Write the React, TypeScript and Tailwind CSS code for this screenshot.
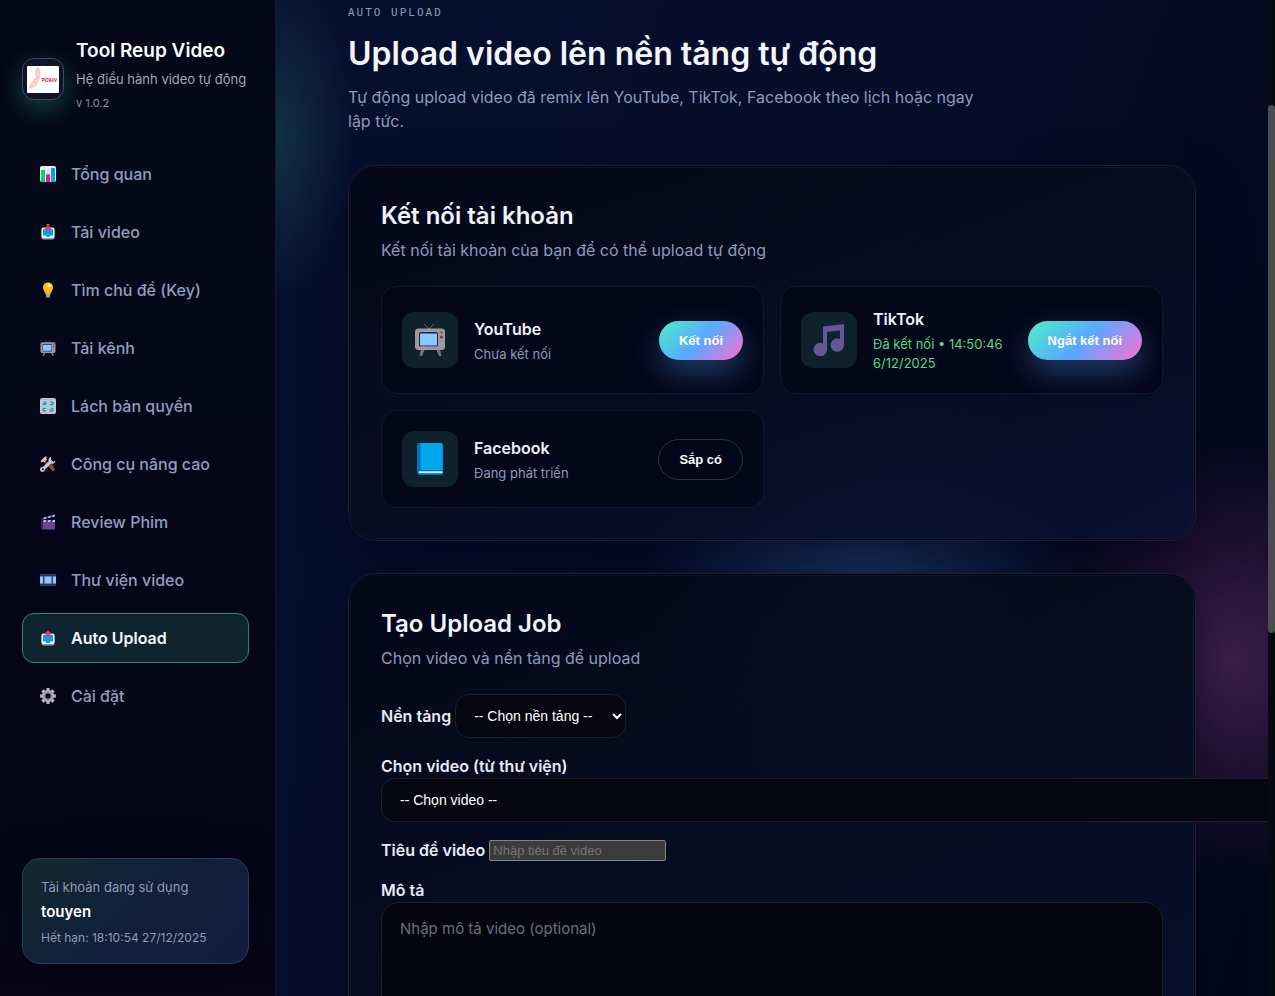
import type { ReactNode } from "react";
import clsx from "clsx";

interface IconProps {
  className?: string;
}

function ChartIcon({ className }: IconProps) {
  return (
    <svg viewBox="0 0 32 32" className={className} aria-hidden="true">
      <rect width="32" height="32" rx="4" fill="#f3eef8" />
      <path
        d="M0 8h32M0 16h32M0 24h32M8 0v32M16 0v32M24 0v32"
        stroke="#cdc4d6"
        strokeWidth="1"
      />
      <path d="M2 8h8v24H4a2 2 0 0 1-2-2z" fill="#00d26a" />
      <path d="M12 17h8v15h-8z" fill="#f70a8d" />
      <path d="M22 4h8v26a2 2 0 0 1-2 2h-6z" fill="#00a6ed" />
    </svg>
  );
}

function TrayIcon({ className, up }: IconProps & { up?: boolean }) {
  return (
    <svg viewBox="0 0 32 32" className={className} aria-hidden="true">
      <rect x="3" y="8" width="26" height="23" rx="4" fill="#9b9b9b" />
      <rect x="3" y="7" width="26" height="21" rx="4" fill="#f4f4f4" />
      <path
        d="M9 9h14a3 3 0 0 1 3 3v11h-5l-2 3h-6l-2-3H6V12a3 3 0 0 1 3-3z"
        fill="#00a6ed"
      />
      {up ? (
        <path d="M16 0l7 8h-4v8h-6V8H9z" fill="#f92f60" />
      ) : (
        <path d="M13 0h6v8.500h4L16 16 9 8.500h4z" fill="#f92f60" />
      )}
    </svg>
  );
}

function BulbIcon({ className }: IconProps) {
  return (
    <svg viewBox="0 0 32 32" className={className} aria-hidden="true">
      <path
        d="M16 1C10 1 6 5.500 6 11c0 5 4 7.500 5 13h10c1-5.500 5-8 5-13 0-5.500-4-10-10-10z"
        fill="#fcc21b"
      />
      <ellipse cx="19" cy="7" rx="4" ry="3" fill="#fff0a3" />
      <path d="M14 24l-1.500-9M18 24l1.500-9" stroke="#f19534" strokeWidth="1.500" />
      <path d="M12 24h8v5a2 2 0 0 1-2 2h-4a2 2 0 0 1-2-2z" fill="#a8a4b0" />
    </svg>
  );
}

function TvIcon({ className }: IconProps) {
  return (
    <svg viewBox="0 0 32 32" className={className} aria-hidden="true">
      <path d="M10 0l5 5M20 0l-5 5" stroke="#636363" strokeWidth="1" />
      <path d="M7 25h4l-3 7H5.500zM22 25h4l1.500 7H25z" fill="#757575" />
      <rect x="1" y="4.500" width="30" height="21.500" rx="3.500" fill="#9b9b9b" />
      <rect x="5" y="8" width="19" height="15" rx="2" fill="#321b41" />
      <path d="M6.500 22.500h16a1.500 1.500 0 0 0 1.500-1.500" stroke="#8d65c5" fill="none" />
      <rect x="6" y="9.500" width="17" height="12" rx="1" fill="#83cbff" />
      <circle cx="27.500" cy="8.500" r="1.300" fill="#636363" />
      <circle cx="27.500" cy="13" r="1.500" fill="#ca0b4a" />
    </svg>
  );
}

function KnobsIcon({ className }: IconProps) {
  return (
    <svg viewBox="0 0 32 32" className={className} aria-hidden="true">
      <rect width="32" height="32" rx="4" fill="#c9c5c9" />
      <path
        d="M3 3h26M3 16h26M3 29h26"
        stroke="#8c878e"
        strokeWidth="1"
        strokeDasharray="2 3"
      />
      <g fill="#0c9be3">
        <circle cx="9" cy="10.500" r="4.200" />
        <circle cx="23" cy="10.500" r="4.200" />
        <circle cx="9" cy="23.500" r="4.200" />
        <circle cx="23" cy="23.500" r="4.200" />
      </g>
      <path
        d="M9 10.500l-2-2M23 10.500l-4 0M9 23.500h4M23 23.500l-2-3"
        stroke="#fff"
        strokeWidth="2"
      />
    </svg>
  );
}

function ToolsIcon({ className }: IconProps) {
  return (
    <svg viewBox="0 0 32 32" className={className} aria-hidden="true">
      <path d="M11 9l19 18-4 4L8 12z" fill="#8a4a32" />
      <path
        d="M1 10l9-9c2-.5 4 0 5 .8l-3 2.200 2 3-5.500 5.500-3-1.500L3 13z"
        fill="#cdc4d6"
      />
      <path
        d="M22 1.500a7 7 0 0 0-4.500 9L5.500 22A5 5 0 1 0 10 27l12-11.500A7 7 0 0 0 31 9l-4.500 2.500-4-3.500z"
        fill="#cdc4d6"
      />
      <path d="M24 14L30 27l-4 4-8-9z" fill="#8a4a32" />
      <circle cx="5.500" cy="26.500" r="1.800" fill="#06071b" />
    </svg>
  );
}

function ClapperIcon({ className }: IconProps) {
  return (
    <svg viewBox="0 0 32 32" className={className} aria-hidden="true">
      <path d="M3 14h27v15a2 2 0 0 1-2 2H5a2 2 0 0 1-2-2z" fill="#6d4590" />
      <path d="M3 14h3v17H5a2 2 0 0 1-2-2z" fill="#3f2357" />
      <path d="M3 12h27v4H3z" fill="#46275f" />
      <path d="M8 12h5l-2 4H6zM17 12h5l-2 4h-5zM26 12h4v2l-1 2h-5z" fill="#b4c6ff" />
      <path d="M3 8l26-7 1 4L4 12z" fill="#46275f" />
      <path d="M8 6.700l5-1.400-1 4-5 1.400zM17 4.300l5-1.400-1 4-5 1.300zM25.500 2l3.500-1 1 4-5.500 1.500z" fill="#b4c6ff" />
    </svg>
  );
}

function FilmIcon({ className }: IconProps) {
  return (
    <svg viewBox="0 0 32 32" className={className} aria-hidden="true">
      <rect y="4" width="32" height="24" fill="#433b6b" />
      <path
        d="M1 6.500h30M1 25.500h30"
        stroke="#1b1638"
        strokeWidth="2"
        strokeDasharray="2 2"
      />
      <path d="M0 9h6v14H0zM9 9h14v14H9zM26 9h6v14h-6z" fill="#83cbff" />
    </svg>
  );
}

function GearIcon({ className }: IconProps) {
  return (
    <svg viewBox="0 0 32 32" className={className} aria-hidden="true">
      <g fill="#b4acbc">
        <rect x="12.500" width="7" height="32" rx="2" />
        <rect x="12.500" width="7" height="32" rx="2" transform="rotate(45 16 16)" />
        <rect x="12.500" width="7" height="32" rx="2" transform="rotate(90 16 16)" />
        <rect x="12.500" width="7" height="32" rx="2" transform="rotate(135 16 16)" />
        <circle cx="16" cy="16" r="12" />
      </g>
      <circle cx="16" cy="16" r="7.500" fill="#7f7691" />
      <circle cx="16" cy="16" r="5" fill="#06071b" />
    </svg>
  );
}

function MusicIcon({ className }: IconProps) {
  return (
    <svg viewBox="0 0 32 32" className={className} aria-hidden="true">
      <path
        d="M10 2.500L31 0v21a6.700 6.700 0 1 1-4-6.100V6.500L14 8v17.500a6.700 6.700 0 1 1-4-6.100z"
        fill="#635994"
      />
    </svg>
  );
}

function BookIcon({ className }: IconProps) {
  return (
    <svg viewBox="0 0 32 32" className={className} aria-hidden="true">
      <path d="M5 0h22a2 2 0 0 1 2 2v28a2 2 0 0 1-2 2H6a3 3 0 0 1-3-3V2a2 2 0 0 1 2-2z" fill="#0074ba" />
      <path d="M6.500 0H27a1.500 1.500 0 0 1 1.500 1.500V27h-22z" fill="#00a6ed" />
      <path d="M5 28.200h23.500v2H5z" fill="#d3e6f5" />
    </svg>
  );
}

function LogoImage() {
  return (
    <svg viewBox="0 0 32 27" className="w-8 shrink-0" aria-hidden="true">
      <rect width="32" height="27" rx="1" fill="#fff" />
      <path
        d="M2 23c6-1 10-5 11-12 1-4 1-8-2-10-3 2-4 6-2 10-3 4-6 7-7 12z"
        fill="#fbd0cb"
      />
      <path d="M3 22c1-6 5-9 9-11" stroke="#f7b5af" fill="none" strokeWidth=".7" />
      <text
        x="14.500"
        y="16"
        fontSize="5"
        fontWeight="700"
        fontFamily="Liberation Sans, sans-serif"
        fill="#d6263c"
      >
        POIHV
      </text>
    </svg>
  );
}

const navItems: { label: string; icon: ReactNode; active?: boolean }[] = [
  { label: "Tổng quan", icon: <ChartIcon className="size-4" /> },
  { label: "Tải video", icon: <TrayIcon className="size-4" /> },
  { label: "Tìm chủ đề (Key)", icon: <BulbIcon className="size-4" /> },
  { label: "Tải kênh", icon: <TvIcon className="size-4" /> },
  { label: "Lách bản quyền", icon: <KnobsIcon className="size-4" /> },
  { label: "Công cụ nâng cao", icon: <ToolsIcon className="size-4" /> },
  { label: "Review Phim", icon: <ClapperIcon className="size-4" /> },
  { label: "Thư viện video", icon: <FilmIcon className="size-4" /> },
  { label: "Auto Upload", icon: <TrayIcon up className="size-4" />, active: true },
  { label: "Cài đặt", icon: <GearIcon className="size-4" /> },
];

function Sidebar() {
  return (
    <aside className="flex w-[276px] shrink-0 flex-col border-r border-[#111a38] bg-[linear-gradient(180deg,#030718_0%,#040a1a_18%,#05061a_45%,#05051a_90%,#08041a_100%)] pt-[37px] pr-[26px] pb-8 pl-[22px]">
      <div className="flex items-center gap-3">
        <div className="flex size-[42px] shrink-0 items-center justify-center rounded-xl border border-[#43465a] bg-[#10142a] shadow-[0_8px_24px_rgba(77,240,200,0.25)]">
          <LogoImage />
        </div>
        <div className="pb-2 whitespace-nowrap">
          <h2 className="text-[19px] leading-7 font-semibold text-white">
            Tool Reup Video
          </h2>
          <p className="pt-1 text-[13px] leading-5 text-[#a3a6b2]">
            Hệ điều hành video tự động
          </p>
          <p className="pt-1 text-[11px] leading-5 text-[#8d909c]">v 1.0.2</p>
        </div>
      </div>

      <nav className="mt-7 flex flex-col gap-2">
        {navItems.map((item) => (
          <a
            key={item.label}
            href="#"
            className={clsx(
              "flex h-[50px] items-center gap-[15px] rounded-xl border px-[17px] text-base",
              item.active
                ? "border-[#2c8779] bg-[#0f2431] font-semibold text-[#f5f7ff]"
                : "border-transparent font-medium text-[#929dbd]"
            )}
          >
            {item.icon}
            {item.label}
          </a>
        ))}
      </nav>

      <div className="mt-auto rounded-[18px] border border-[#2c3b52] bg-[linear-gradient(135deg,#12292f_0%,#10213a_45%,#111c3e_100%)] px-[18px] py-4 shadow-[0_10px_40px_rgba(2,4,18,0.6)]">
        <p className="text-[13px] leading-6 text-[#8f9aba]">
          Tài khoản đang sử dụng
        </p>
        <p className="text-[15px] leading-[26px] font-semibold text-white">
          touyen
        </p>
        <p className="pt-1 text-[12px] leading-[18px] text-[#8f9aba]">
          Hết hạn: 18:10:54 27/12/2025
        </p>
      </div>
    </aside>
  );
}

interface PlatformProps {
  name: string;
  status: string;
  icon: ReactNode;
  action: string;
  connected?: boolean;
  comingSoon?: boolean;
}

function PlatformCard({
  name,
  status,
  icon,
  action,
  connected,
  comingSoon,
}: PlatformProps) {
  return (
    <div className="flex items-center gap-4 rounded-2xl border border-[#15182c] bg-[#040619]/90 p-5">
      <div className="flex size-14 shrink-0 items-center justify-center rounded-xl bg-[#0e212d]">
        {icon}
      </div>
      <div className="min-w-0 flex-1">
        <h3 className="text-base leading-6 font-semibold text-[#f0f2fd]">
          {name}
        </h3>
        <p
          className={clsx(
            "pt-1 text-[13px] leading-[19px]",
            connected ? "text-[#4ade80]" : "text-[#8f9aba]"
          )}
        >
          {status}
        </p>
      </div>
      <button
        className={clsx(
          "shrink-0 rounded-full font-['Liberation_Sans',sans-serif] text-[13px] leading-[15px] font-bold text-white",
          comingSoon
            ? "border border-[#303346] px-5 py-3"
            : "bg-[linear-gradient(135deg,#4df0c8_0%,#5aa7ff_50%,#ff6fd1_100%)] px-5 py-3 shadow-[0_12px_30px_rgba(90,167,255,0.35)]"
        )}
      >
        {action}
      </button>
    </div>
  );
}

function Panel({
  title,
  subtitle,
  children,
}: {
  title: string;
  subtitle: string;
  children: ReactNode;
}) {
  return (
    <section className="rounded-[28px] border border-[#172038] bg-[linear-gradient(160deg,rgba(4,6,24,0.92)_0%,rgba(6,12,31,0.92)_45%,rgba(9,17,48,0.92)_100%)] p-8 shadow-[0_20px_50px_rgba(2,3,20,0.4),inset_0_0_0_1px_rgba(3,5,20,1),inset_0_0_0_2px_rgba(255,255,255,0.04)]">
      <h2 className="text-2xl leading-9 font-semibold text-[#f3f5ff]">{title}</h2>
      <p className="pt-1 leading-6 text-[#8f9aba]">{subtitle}</p>
      {children}
    </section>
  );
}

const fieldStyle =
  "border border-[#1d1f2a] bg-[#05060f]/95 font-['Liberation_Sans',sans-serif] text-[14px] text-white";
const labelStyle = "text-base leading-6 font-semibold text-[#e6eaf8]";

function UploadForm() {
  return (
    <form className="mt-6 flex flex-col items-start">
      <div className="flex items-center gap-1">
        <label htmlFor="platform" className={labelStyle}>
          Nền tảng
        </label>
        <select
          id="platform"
          className={clsx(fieldStyle, "h-11 w-[171px] rounded-[14px] px-3.5")}
        >
          <option>-- Chọn nền tảng --</option>
        </select>
      </div>

      <label htmlFor="video" className={clsx(labelStyle, "mt-4")}>
        Chọn video (từ thư viện)
      </label>
      <select
        id="video"
        className={clsx(fieldStyle, "h-11 w-[130%] rounded-[14px] px-3.5")}
      >
        <option>-- Chọn video --</option>
      </select>

      <div className="mt-4 flex items-center gap-1">
        <label htmlFor="title" className={labelStyle}>
          Tiêu đề video
        </label>
        <input
          id="title"
          placeholder="Nhập tiêu đề video"
          className="h-[21px] w-[177px] rounded-[2px] border border-[#858585] bg-[#3b3b3b] px-[3px] font-['Liberation_Sans',sans-serif] text-[13px] text-white placeholder:text-[#757575]"
        />
      </div>

      <label htmlFor="description" className={clsx(labelStyle, "mt-4")}>
        Mô tả
      </label>
      <textarea
        id="description"
        rows={6}
        placeholder="Nhập mô tả video (optional)"
        className="w-full resize-none rounded-[18px] border border-[#1d1f2a] bg-[#04060f] px-[18px] py-3.5 text-[15px] leading-6 text-white placeholder:text-[#6d6e75]"
      />
    </form>
  );
}

export default function App() {
  return (
    <div className="flex h-screen overflow-hidden bg-[#030619] font-[Inter,sans-serif] scheme-dark">
      <Sidebar />

      <main className="min-w-0 flex-1 overflow-hidden bg-[radial-gradient(ellipse_80px_165px_at_0px_135px,rgba(30,80,88,0.5),transparent),radial-gradient(circle_220px_at_590px_590px,rgba(34,74,130,0.65),transparent),radial-gradient(ellipse_200px_220px_at_96%_660px,rgba(72,34,82,0.85),rgba(52,24,66,0.55)_50%,transparent),linear-gradient(110deg,#06102e_0%,#060d29_50%,#03061a_100%)] px-[72px] pt-[5px]">
        <header>
          <p className="font-['DejaVu_Sans_Mono',monospace] text-[11px] leading-4 tracking-[2px] text-[#8f9aba] uppercase">
            Auto Upload
          </p>
          <h1 className="pt-3 text-[32px] leading-[42px] font-semibold text-[#f3f5ff]">
            Upload video lên nền tảng tự động
          </h1>
          <p className="max-w-[640px] pt-2.5 leading-6 text-[#8f9aba]">
            Tự động upload video đã remix lên YouTube, TikTok, Facebook theo
            lịch hoặc ngay lập tức.
          </p>
        </header>

        <div className="mt-8 flex flex-col gap-8">
          <Panel
            title="Kết nối tài khoản"
            subtitle="Kết nối tài khoản của bạn để có thể upload tự động"
          >
            <div className="mt-6 grid grid-cols-2 gap-4">
              <PlatformCard
                name="YouTube"
                status="Chưa kết nối"
                icon={<TvIcon className="size-8" />}
                action="Kết nối"
              />
              <PlatformCard
                name="TikTok"
                status="Đã kết nối • 14:50:46 6/12/2025"
                icon={<MusicIcon className="size-8" />}
                action="Ngắt kết nối"
                connected
              />
              <PlatformCard
                name="Facebook"
                status="Đang phát triển"
                icon={<BookIcon className="size-8" />}
                action="Sắp có"
                comingSoon
              />
            </div>
          </Panel>

          <Panel
            title="Tạo Upload Job"
            subtitle="Chọn video và nền tảng để upload"
          >
            <UploadForm />
          </Panel>
        </div>
      </main>

      {/* scroll track */}
      <div className="flex w-[7px] shrink-0 flex-col bg-[#060a12]">
        <div className="basis-[105px]" />
        <div className="h-[53%] rounded-full bg-[#4b4b50]" />
      </div>
    </div>
  );
}
